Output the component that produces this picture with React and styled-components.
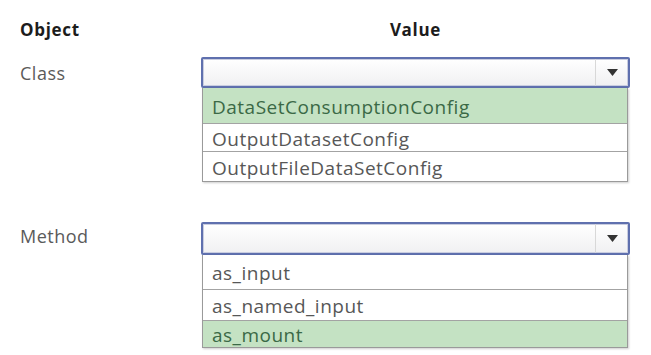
import styled, { createGlobalStyle } from "styled-components";

const GlobalStyle = createGlobalStyle`
  body {
    margin: 0;
    background: #ffffff;
    font-family: "Open Sans", "Noto Sans", sans-serif;
  }
`;

const Page = styled.div`
  width: 651px;
  height: 355px;
  display: grid;
  grid-template-columns: 181px 429px;
  align-items: start;
  align-content: start;
  padding: 19px 0 0 20px;
  box-sizing: border-box;
`;

const HeadCell = styled.div`
  font-size: 17px;
  font-weight: 700;
  letter-spacing: 0.7px;
  color: #1c1c1c;
  line-height: 22px;
  height: 22px;
  text-align: ${(p) => (p.$center ? "center" : "left")};
`;

const Label = styled.div`
  font-size: 18px;
  letter-spacing: 0.5px;
  color: #5a5a5a;
  line-height: 22px;
  padding-top: ${(p) => p.$top}px;
`;

const Field = styled.div`
  display: flex;
  flex-direction: column;
  margin-top: ${(p) => p.$top}px;
`;

const Select = styled.div`
  height: ${(p) => p.$h}px;
  box-sizing: border-box;
  border: 2px solid #5f70ae;
  border-radius: 2px;
  box-shadow: inset 0 0 0 1px #c9cde0;
  background: linear-gradient(#ffffff, #f0f0f2);
  display: flex;
  justify-content: flex-end;
`;

const ArrowBox = styled.div`
  width: 32px;
  border-left: 1px solid #d8d8d8;
  display: flex;
  align-items: center;
  justify-content: center;
`;

const List = styled.ul`
  list-style: none;
  margin: 0 2px 0 1px;
  padding: 0;
  border: 1px solid #9a9a9a;
  border-top: none;
  box-shadow: 1px 1px 2px rgba(0, 0, 0, 0.2);
`;

const Option = styled.li`
  height: ${(p) => p.$h}px;
  box-sizing: border-box;
  padding: 2px 0 0 9px;
  display: flex;
  align-items: center;
  font-size: 19px;
  letter-spacing: 0.5px;
  color: ${(p) => (p.$picked ? "#3b6946" : "#575757")};
  background: ${(p) => (p.$picked ? "#c4e2c3" : "#ffffff")};
  & + & {
    border-top: 1px solid #a3a3a3;
  }
`;

const Arrow = () => (
  <svg width="11" height="7" viewBox="0 0 11 7">
    <path d="M0 0 H11 L5.5 7 Z" fill="#333" />
  </svg>
);

const classes = [
  { text: "DataSetConsumptionConfig", picked: true, h: 35 },
  { text: "OutputDatasetConfig", h: 28 },
  { text: "OutputFileDataSetConfig", h: 30 },
];

const methods = [
  { text: "as_input", h: 34 },
  { text: "as_named_input", h: 31 },
  { text: "as_mount", picked: true, h: 27 },
];

function Dropdown({ top, h, options }) {
  return (
    <Field $top={top}>
      <Select $h={h}>
        <ArrowBox>
          <Arrow />
        </ArrowBox>
      </Select>
      <List>
        {options.map((o) => (
          <Option key={o.text} $picked={o.picked} $h={o.h}>
            {o.text}
          </Option>
        ))}
      </List>
    </Field>
  );
}

export default function App() {
  return (
    <>
      <GlobalStyle />
      <Page>
        <HeadCell>Object</HeadCell>
        <HeadCell $center>Value</HeadCell>
        <Label $top={21}>Class</Label>
        <Dropdown top={16} h={31} options={classes} />
        <Label $top={43}>Method</Label>
        <Dropdown top={40} h={33} options={methods} />
      </Page>
    </>
  );
}
